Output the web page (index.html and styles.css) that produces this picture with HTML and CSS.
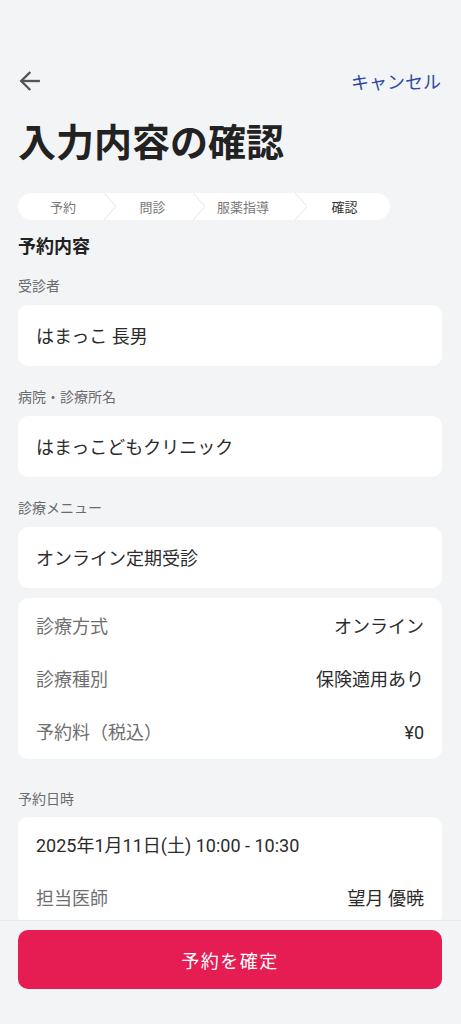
FILE: index.html
```html
<!DOCTYPE html>
<html lang="ja">
<head>
    <meta charset="UTF-8">
    <meta name="viewport" content="width=device-width, initial-scale=1.0">
    <title>入力内容の確認</title>
    <link rel="stylesheet" href="styles.css">
</head>
<body>

    <div class="page">
        <header class="topbar">
            <button class="back" aria-label="戻る">
                <svg width="28" height="28" viewBox="0 0 24 24" fill="none" stroke="#555" stroke-width="2" stroke-linecap="square">
                    <path d="M19.5 12H5.5"/>
                    <path d="M11.5 5L4.5 12l7 7"/>
                </svg>
            </button>
            <a class="cancel" href="#">キャンセル</a>
        </header>

        <h1 class="title">入力内容の確認</h1>

        <!-- ステップ表示 -->
        <ol class="steps">
            <li class="step s1">予約<svg class="chev" viewBox="0 0 12 27"><polyline points="0,0 12,13.5 0,27"/></svg></li>
            <li class="step s2">問診<svg class="chev" viewBox="0 0 12 27"><polyline points="0,0 12,13.5 0,27"/></svg></li>
            <li class="step s3">服薬指導<svg class="chev" viewBox="0 0 12 27"><polyline points="0,0 12,13.5 0,27"/></svg></li>
            <li class="step s4 active">確認</li>
        </ol>

        <h2 class="section">予約内容</h2>

        <p class="label">受診者</p>
        <div class="card single">はまっこ 長男</div>

        <p class="label">病院・診療所名</p>
        <div class="card single">はまっこどもクリニック</div>

        <p class="label">診療メニュー</p>
        <div class="card single">オンライン定期受診</div>

        <div class="card rows">
            <div class="row"><span class="key">診療方式</span><span class="val">オンライン</span></div>
            <div class="row"><span class="key">診療種別</span><span class="val">保険適用あり</span></div>
            <div class="row"><span class="key">予約料（税込）</span><span class="val">¥0</span></div>
        </div>

        <p class="label gap">予約日時</p>
        <div class="card rows">
            <div class="row"><span class="val">2025年1月11日(土) 10:00 - 10:30</span></div>
            <div class="row"><span class="key">担当医師</span><span class="val">望月 優暁</span></div>
        </div>
    </div>

    <footer class="bottom">
        <button class="confirm">予約を確定</button>
    </footer>

</body>
</html>
```

FILE: styles.css
```css
body {
    margin: 0;
    background-color: #f3f4f6;
    font-family: Roboto, "Noto Sans CJK JP", sans-serif;
    color: #2b2b2b;
}

.page {
    padding: 53px 19px 120px 18px;
}

.topbar {
    height: 56px;
    display: flex;
    align-items: center;
    justify-content: space-between;
}

.back {
    border: none;
    background: none;
    padding: 0;
    margin-left: -2px;
    width: 28px;
    height: 28px;
}

.back svg {
    display: block;
}

.cancel {
    color: #2d4ba6;
    font-size: 18px;
    text-decoration: none;
    margin-right: 1px;
}

.title {
    margin: 9px 0 0;
    font-size: 38px;
    line-height: 50px;
    font-weight: 700;
    color: #222;
}

/* ステップ */
.steps {
    list-style: none;
    margin: 25px 0 0;
    padding: 0;
    display: flex;
    width: 372px;
    height: 27px;
    background: #fff;
    border-radius: 14px;
}

.step {
    position: relative;
    display: flex;
    align-items: center;
    justify-content: center;
    font-size: 13px;
    color: #777;
}

.s1 { width: 90px; }
.s2 { width: 89px; }
.s3 { width: 102px; padding-right: 10px; box-sizing: border-box; }
.s4 { width: 91px; }

.step.active {
    color: #333;
}

.chev {
    position: absolute;
    right: -8px;
    top: 0;
    width: 12px;
    height: 27px;
    fill: none;
    stroke: #e4e5e7;
    stroke-width: 1;
}

.section {
    margin: 14px 0 0;
    font-size: 18px;
    line-height: 26px;
    font-weight: 700;
    color: #222;
}

.label {
    margin: 16px 0 9px;
    font-size: 14px;
    line-height: 20px;
    color: #6b6b6b;
}

.card + .label {
    margin-top: 21px;
}

.card + .label.gap {
    margin-top: 30px;
    margin-bottom: 8px;
}

.card {
    background: #fff;
    border-radius: 10px;
    font-size: 18px;
    line-height: 25px;
}

.card.single {
    padding: 19px 18px 17px;
    color: #2b2b2b;
}

.card.rows {
    margin-top: 10px;
    padding: 2px 18px 0;
}

.label + .card.rows {
    margin-top: 0;
}

.row {
    height: 53px;
    display: flex;
    align-items: center;
    justify-content: space-between;
}

.key {
    color: #6f6f6f;
}

.val {
    color: #2b2b2b;
}

/* 固定フッター */
.bottom {
    position: fixed;
    left: 0;
    right: 0;
    bottom: 0;
    box-sizing: border-box;
    height: 104px;
    background: #f3f4f6;
    border-top: 1px solid #e9eaec;
    padding: 9px 19px 0 18px;
}

.confirm {
    width: 100%;
    height: 59px;
    border: none;
    border-radius: 10px;
    background: #e51d52;
    color: #fff;
    font-family: Roboto, "Noto Sans CJK JP", sans-serif;
    font-size: 18px;
    letter-spacing: 1.5px;
}
```
